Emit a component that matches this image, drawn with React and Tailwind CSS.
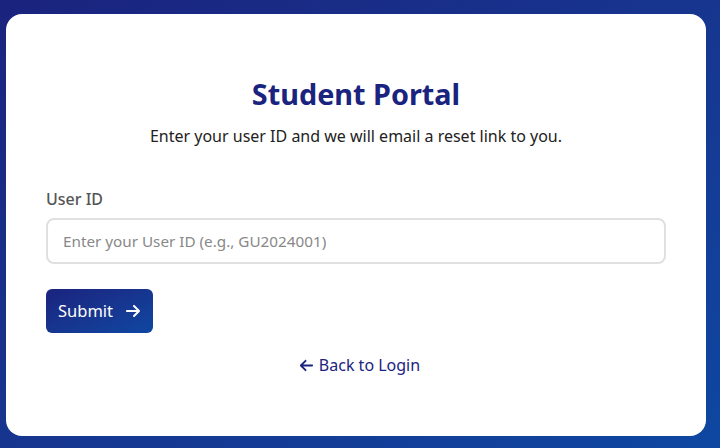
import React from "react";
import { FaArrowRight, FaArrowLeft } from "react-icons/fa6";

export default function App() {
  return (
    <div
      className="w-[720px] h-[448px] overflow-hidden bg-gradient-to-br from-[#1a237e] to-[#0d47a1] pl-[6px] pt-[14px]"
      style={{ fontFamily: '"Noto Sans", "Open Sans", sans-serif' }}
    >
      <div className="w-[700px] h-[422px] bg-white rounded-2xl px-[40px] pt-[62px] flex flex-col">
        <h1 className="text-center text-[28.8px] leading-[36px] font-bold text-[#1a237e]">
          Student Portal
        </h1>
        <p className="text-center text-[16px] leading-[24px] text-[#222] mt-[12px]">
          Enter your user ID and we will email a reset link to you.
        </p>
        <label className="mt-[40px] text-[16px] leading-[22px] font-medium text-[#555]">
          User ID
        </label>
        <div className="mt-[8px] h-[46px] w-full border-2 border-[#e0e0e0] rounded-lg flex items-center px-[15px]">
          <span className="text-[15.25px] text-[#888]">Enter your User ID (e.g., GU2024001)</span>
        </div>
        <div className="mt-[25px]">
          <button className="h-[44px] pl-[12px] pr-[12px] rounded-md bg-gradient-to-br from-[#1a237e] to-[#0d47a1] text-white text-[16.5px] flex items-center gap-[12px]">
            <span>Submit</span>
            <FaArrowRight className="w-[16px] h-[16px]" />
          </button>
        </div>
        <div className="mt-[20px] flex justify-center pl-[7px]">
          <span className="text-[#1a237e] text-[16px] flex items-center gap-[5px]">
            <FaArrowLeft className="w-[15px] h-[15px]" />
            Back to Login
          </span>
        </div>
      </div>
    </div>
  );
}
